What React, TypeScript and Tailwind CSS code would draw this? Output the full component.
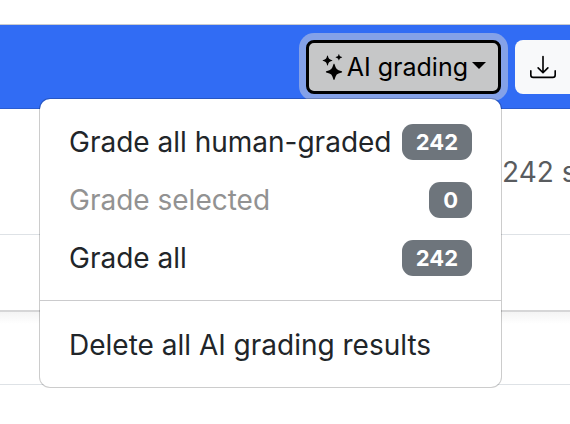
import React from 'react';
import { BsDownload, BsStars } from 'react-icons/bs';

interface GradingAction {
  id: string;
  label: string;
  count: number;
}

export default function App() {
  const actions: GradingAction[] = [
    { id: 'human', label: 'Grade all human-graded', count: 242 },
    { id: 'selected', label: 'Grade selected', count: 0 },
    { id: 'all', label: 'Grade all', count: 242 }
  ];

  return (
    <div className="min-h-screen overflow-hidden bg-white font-['Inter','Liberation_Sans',sans-serif] text-[28px] text-[#212529]">
      <div className="h-[25px] border-b border-[#c9cbcf]" />

      <header className="flex h-[84px] items-start justify-end border-b border-[#2a5cd0] bg-[#316cf4] pt-[15px]">
        <div className="relative mr-[14px]">
          <button
            type="button"
            aria-expanded="true"
            className="flex h-[54px] items-center rounded-[8px] border-3 border-black bg-[#c6c7c8] px-[12px] text-[25px] leading-[38px] whitespace-nowrap text-black ring-7 ring-[#84a1e8]"
          >
            <BsStars className="size-[26px]" />
            AI grading
            <span className="mb-[4px] ml-[4px] border-x-7 border-t-7 border-x-transparent border-t-black" />
          </button>

          <div className="absolute top-full -right-px z-10 mt-1 w-[463px] rounded-[11px] border border-black/20 bg-white bg-clip-padding pt-[14px] pb-[13px]">
            {actions.map((action) => (
              <button
                key={action.id}
                type="button"
                disabled={action.count === 0}
                className="flex h-[58px] w-full items-center justify-between px-[29px] whitespace-nowrap disabled:text-[#929292]"
              >
                {action.label}
                <span className="flex h-[36px] items-center rounded-[11px] bg-[#6e757c] px-[14px] text-[22px] font-bold text-white">
                  {action.count}
                </span>
              </button>
            ))}
            <hr className="mt-[13px] mb-[15px] border-[#cbcbcd]" />
            <button type="button" className="flex h-[58px] w-full items-center px-[29px] whitespace-nowrap">
              Delete all AI grading results
            </button>
          </div>
        </div>

        <button
          type="button"
          aria-label="Download"
          className="flex h-[54px] w-[55px] items-center rounded-l-[8px] bg-[#f8f9fa] pl-[15px] text-black"
        >
          <BsDownload className="size-[26px]" />
        </button>
      </header>

      <main>
        <div className="flex h-[126px] items-center justify-end border-b border-[#dee2e6] text-[#595c5f]">
          <span className="w-[68px] whitespace-nowrap">242 s</span>
        </div>
        <div className="h-[77px] border-b-2 border-[#d6d6d7]" />
        <div className="h-[73px] border-b border-[#dee2e6]">
          <div className="h-3 bg-linear-to-b from-[#f4f4f4] to-white" />
        </div>
      </main>
    </div>
  );
}
